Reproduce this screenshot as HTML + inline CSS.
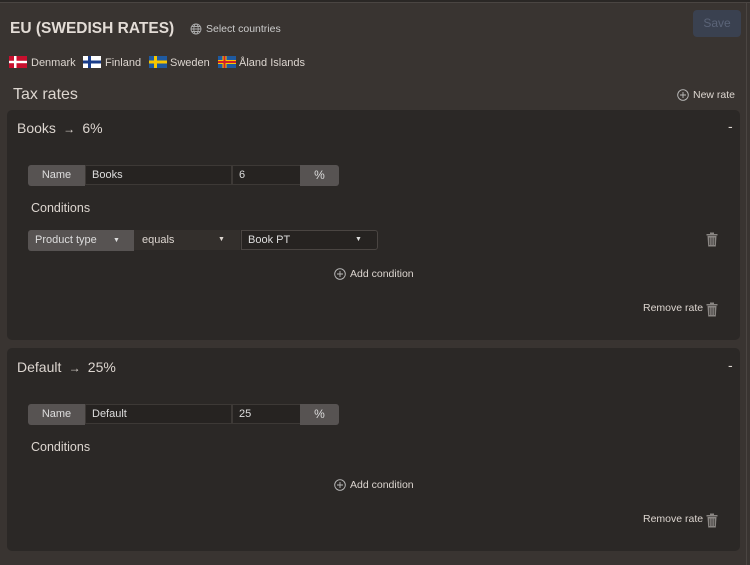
<!DOCTYPE html>
<html><head><meta charset="utf-8"><style>
*{margin:0;padding:0;box-sizing:border-box}
body{width:750px;height:565px;background:#393431;font-family:"Liberation Sans",sans-serif;color:#ddd6d0;position:relative;overflow:hidden}
.a{position:absolute;white-space:nowrap}
.card{position:absolute;left:7px;width:733px;background:#2b2826;border-radius:5px}
.lbl{background:#575352;color:#ddd;font-size:11px;text-align:center;line-height:21px}
.inp{background:#262321;border:1px solid #3d3936;font-size:11px;line-height:18px;padding-left:6px;color:#ddd}
.flag{position:absolute;top:56px;width:18px;height:12px}
.s{font-size:10.5px}
</style></head><body>
<div class="a" style="left:0;top:0;width:750px;height:2px;background:#2a2725"></div>
<div class="a" style="left:0;top:2px;width:750px;height:1px;background:#4a4542"></div>
<div class="a" style="left:746px;top:2px;width:1px;height:563px;background:#4a4542"></div>
<div class="a" style="left:10px;top:20px;font-size:15.5px;font-weight:bold;color:#e3dcd6">EU (SWEDISH RATES)</div>
<svg class="a" style="left:190px;top:23px" width="12" height="12" viewBox="0 0 12 12" fill="none" stroke="#aaa" stroke-width="0.9"><circle cx="6" cy="6" r="5"/><ellipse cx="6" cy="6" rx="2.2" ry="5"/><path d="M1 6h10M2 3.5h8M2 8.5h8"/></svg>
<div class="a s" style="left:206px;top:23px;color:#ccc">Select countries</div>
<div class="a" style="left:693px;top:10px;width:48px;height:27px;background:#3a4150;border-radius:4px;color:#5b6478;font-size:12px;text-align:center;line-height:27px">Save</div>
<svg class="flag" style="left:9px" viewBox="0 0 18 12"><rect width="18" height="12" fill="#c8102e"/><rect x="5" width="2.5" height="12" fill="#fff"/><rect y="4.8" width="18" height="2.4" fill="#fff"/></svg>
<div class="a" style="left:31px;top:57px;font-size:11px">Denmark</div>
<svg class="flag" style="left:83px" viewBox="0 0 18 12"><rect width="18" height="12" fill="#fff"/><rect x="5" width="3" height="12" fill="#1a3d8a"/><rect y="4.5" width="18" height="3" fill="#1a3d8a"/></svg>
<div class="a" style="left:105px;top:57px;font-size:11px">Finland</div>
<svg class="flag" style="left:149px" viewBox="0 0 18 12"><rect width="18" height="12" fill="#1f5aa0"/><rect x="5" width="3" height="12" fill="#f7c600"/><rect y="4.5" width="18" height="3" fill="#f7c600"/></svg>
<div class="a" style="left:170px;top:57px;font-size:11px">Sweden</div>
<svg class="flag" style="left:218px" viewBox="0 0 18 12"><rect width="18" height="12" fill="#1f5aa0"/><rect x="4.5" width="4" height="12" fill="#f7c600"/><rect y="4" width="18" height="4" fill="#f7c600"/><rect x="5.5" width="2" height="12" fill="#d21f2a"/><rect y="5" width="18" height="2" fill="#d21f2a"/></svg>
<div class="a" style="left:239px;top:57px;font-size:11px">Åland Islands</div>
<div class="a" style="left:13px;top:86px;font-size:16px">Tax rates</div>
<svg class="a" style="left:677px;top:89px" width="12" height="12" viewBox="0 0 12 12" fill="none" stroke="#bbb" stroke-width="0.9"><circle cx="6" cy="6" r="5.3"/><path d="M6 3v6M3 6h6"/></svg>
<div class="a s" style="left:693px;top:89px">New rate</div>

<div class="card" style="top:110px;height:230px"></div>
<div class="a" style="left:17px;top:120px;font-size:14px">Books <span style="font-size:12px">&nbsp;→&nbsp;</span> 6%</div>
<div class="a" style="left:728px;top:118px;font-size:14px">-</div>
<div class="a lbl" style="left:28px;top:165px;width:57px;border-radius:3px 0 0 3px">Name</div>
<div class="a inp" style="left:85px;top:165px;width:147px;height:20px">Books</div>
<div class="a inp" style="left:232px;top:165px;width:69px;height:20px">6</div>
<div class="a lbl" style="left:300px;top:165px;width:39px;font-size:12px;border-radius:0 3px 3px 0">%</div>
<div class="a" style="left:31px;top:201px;font-size:12.5px">Conditions</div>
<div class="a lbl" style="left:28px;top:230px;width:106px;text-align:left;padding-left:7px;border-radius:3px 0 0 3px">Product type<span style="position:absolute;left:85px;font-size:7px">▼</span></div>
<div class="a" style="left:134px;top:230px;width:106px;height:20px;background:#332f2c;font-size:11px;line-height:20px;padding-left:8px">equals<span style="position:absolute;left:84px;font-size:7px">▼</span></div>
<div class="a inp" style="left:241px;top:230px;width:137px;height:20px;border-color:#4a4542;border-radius:0 3px 3px 0">Book PT<span style="position:absolute;left:113px;font-size:7px">▼</span></div>
<svg class="a" style="left:706px;top:232px" width="12" height="15" viewBox="0 0 12 15" fill="#8a8683"><rect x="4" y="0.5" width="4" height="1.5"/><rect x="0.5" y="2" width="11" height="1.5"/><path d="M1.5 4h9l-.7 10.5H2.2z"/><path d="M3.8 5.5v7.5M6 5.5v7.5M8.2 5.5v7.5" stroke="#2b2826" stroke-width="0.8"/></svg>
<svg class="a" style="left:334px;top:268px" width="12" height="12" viewBox="0 0 12 12" fill="none" stroke="#bbb" stroke-width="0.9"><circle cx="6" cy="6" r="5.3"/><path d="M6 3v6M3 6h6"/></svg>
<div class="a s" style="left:350px;top:268px">Add condition</div>
<div class="a s" style="left:643px;top:302px">Remove rate</div>
<svg class="a" style="left:706px;top:302px" width="12" height="15" viewBox="0 0 12 15" fill="#8a8683"><rect x="4" y="0.5" width="4" height="1.5"/><rect x="0.5" y="2" width="11" height="1.5"/><path d="M1.5 4h9l-.7 10.5H2.2z"/><path d="M3.8 5.5v7.5M6 5.5v7.5M8.2 5.5v7.5" stroke="#2b2826" stroke-width="0.8"/></svg>

<div class="card" style="top:348px;height:203px"></div>
<div class="a" style="left:17px;top:359px;font-size:14px">Default <span style="font-size:12px">&nbsp;→&nbsp;</span> 25%</div>
<div class="a" style="left:728px;top:357px;font-size:14px">-</div>
<div class="a lbl" style="left:28px;top:404px;width:57px;border-radius:3px 0 0 3px">Name</div>
<div class="a inp" style="left:85px;top:404px;width:147px;height:20px">Default</div>
<div class="a inp" style="left:232px;top:404px;width:69px;height:20px">25</div>
<div class="a lbl" style="left:300px;top:404px;width:39px;font-size:12px;border-radius:0 3px 3px 0">%</div>
<div class="a" style="left:31px;top:440px;font-size:12.5px">Conditions</div>
<svg class="a" style="left:334px;top:479px" width="12" height="12" viewBox="0 0 12 12" fill="none" stroke="#bbb" stroke-width="0.9"><circle cx="6" cy="6" r="5.3"/><path d="M6 3v6M3 6h6"/></svg>
<div class="a s" style="left:350px;top:479px">Add condition</div>
<div class="a s" style="left:643px;top:513px">Remove rate</div>
<svg class="a" style="left:706px;top:513px" width="12" height="15" viewBox="0 0 12 15" fill="#8a8683"><rect x="4" y="0.5" width="4" height="1.5"/><rect x="0.5" y="2" width="11" height="1.5"/><path d="M1.5 4h9l-.7 10.5H2.2z"/><path d="M3.8 5.5v7.5M6 5.5v7.5M8.2 5.5v7.5" stroke="#2b2826" stroke-width="0.8"/></svg>
</body></html>
